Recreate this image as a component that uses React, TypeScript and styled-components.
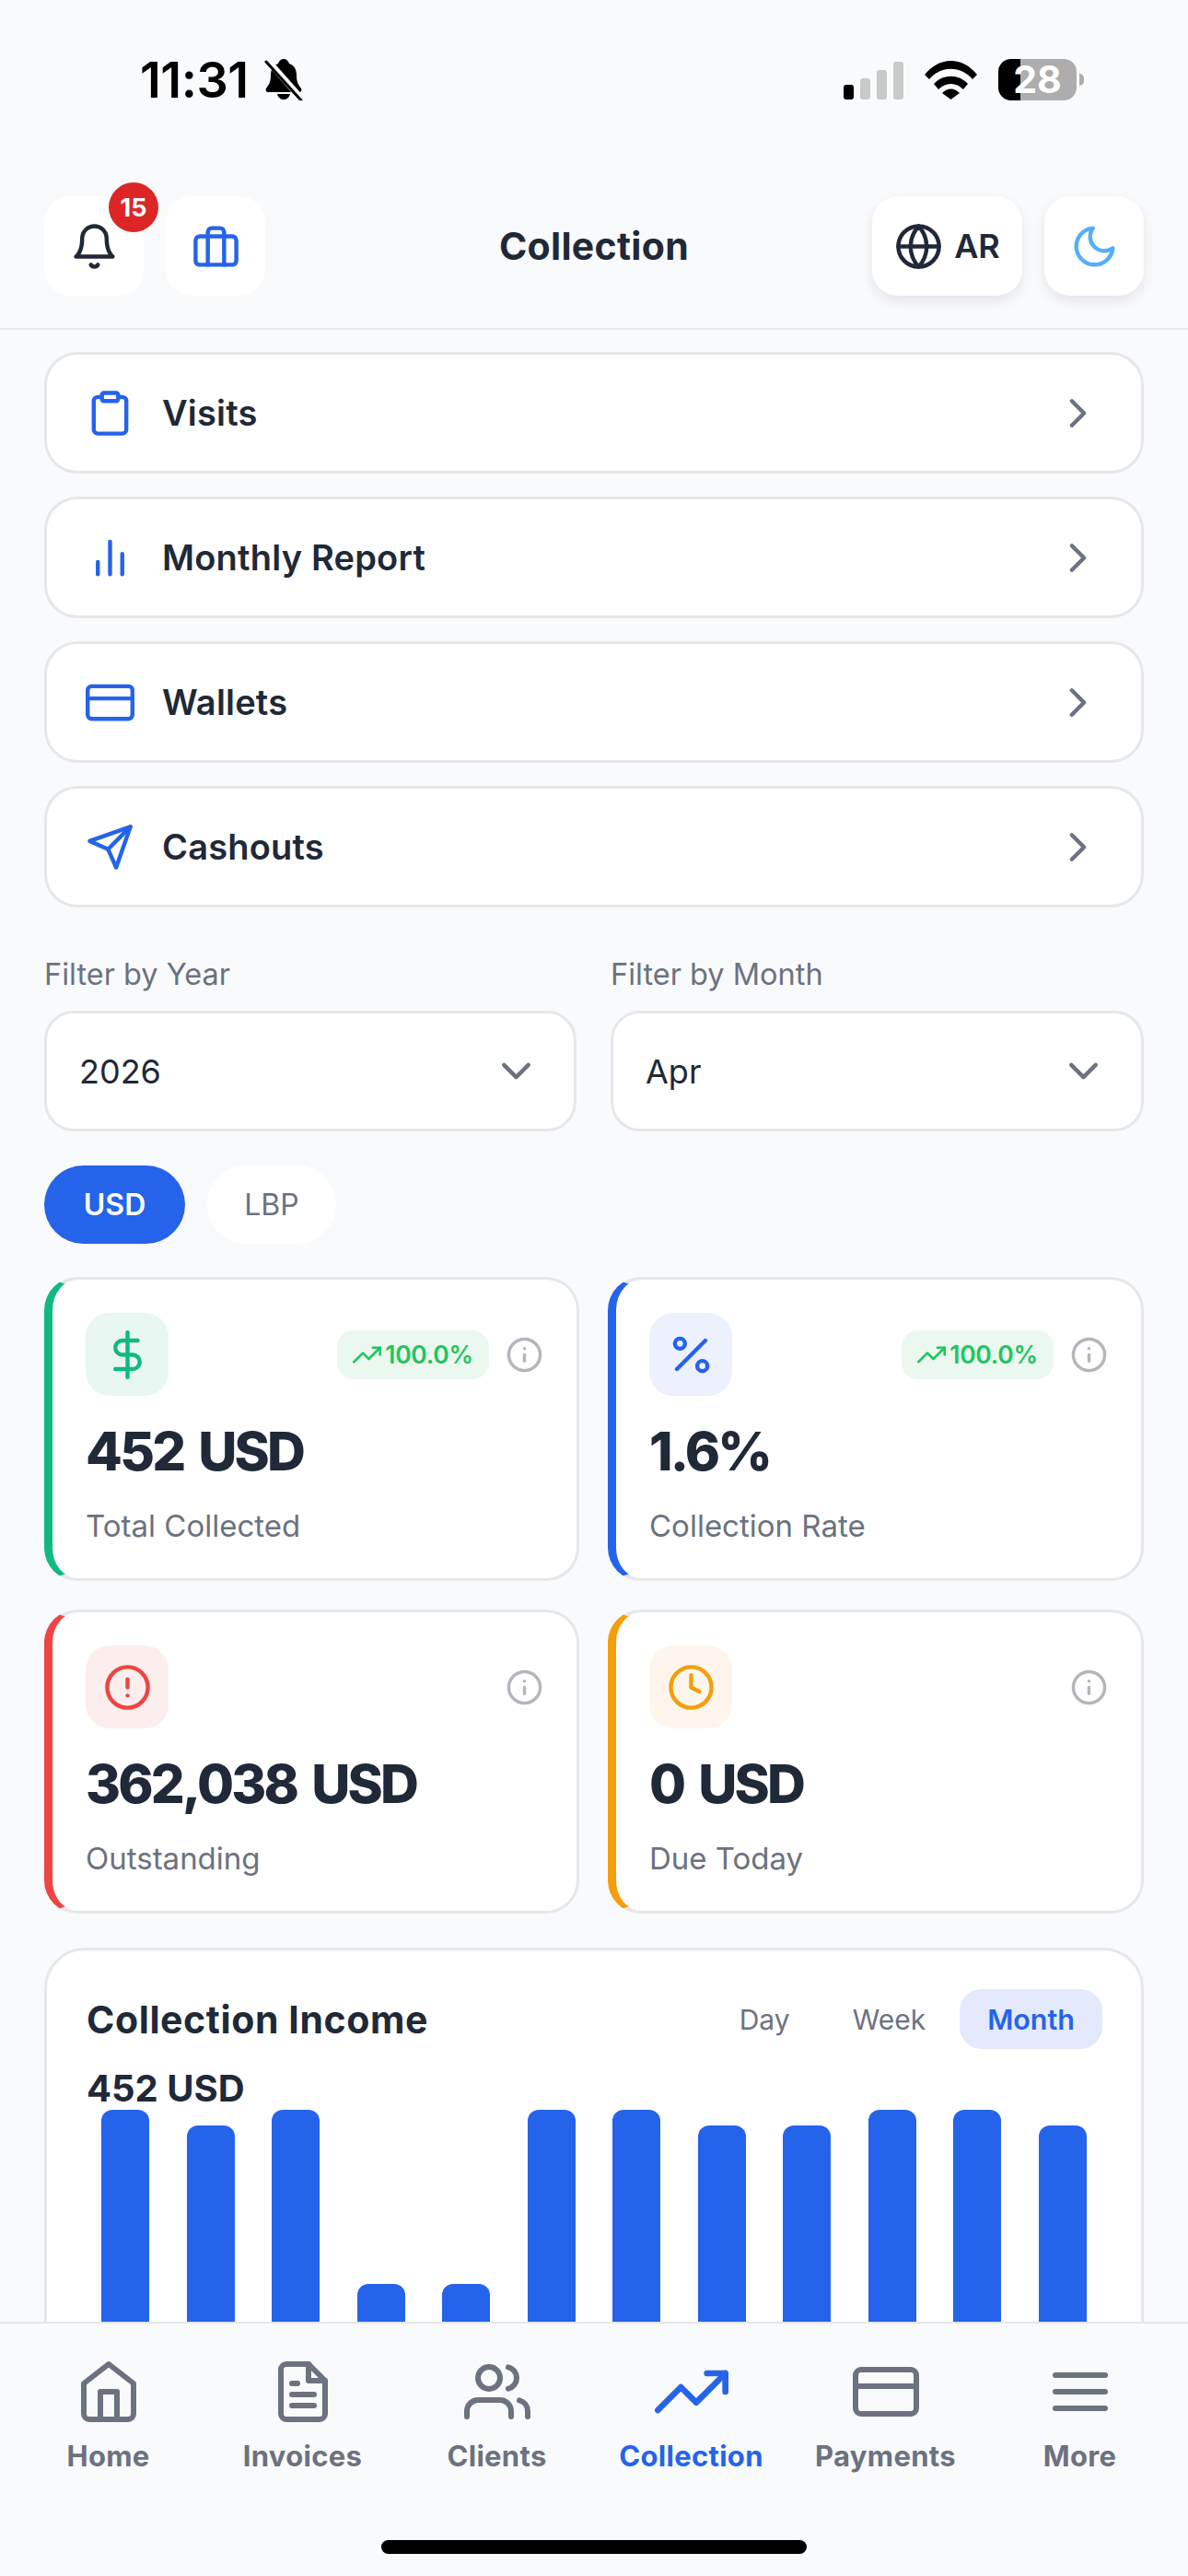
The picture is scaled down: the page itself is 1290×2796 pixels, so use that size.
import styled, { createGlobalStyle } from 'styled-components';
import {
  FiAlertCircle,
  FiBarChart2,
  FiBell,
  FiBriefcase,
  FiChevronDown,
  FiChevronRight,
  FiClipboard,
  FiClock,
  FiCreditCard,
  FiDollarSign,
  FiFileText,
  FiGlobe,
  FiHome,
  FiInfo,
  FiMenu,
  FiMoon,
  FiPercent,
  FiSend,
  FiTrendingUp,
  FiUsers,
} from 'react-icons/fi';
import type { ReactNode } from 'react';

const BLUE = '#2563eb';
const INK = '#1f2937';
const MUTED = '#6b7280';
const LINE = '#e5e7eb';
const FONT = `Inter, "Liberation Sans", sans-serif`;

const GlobalStyle = createGlobalStyle`
  html, body {
    margin: 0;
    padding: 0;
    background: #f9fafc;
  }
  * {
    box-sizing: border-box;
  }
`;

const Screen = styled.div`
  position: relative;
  width: 1290px;
  height: 2796px;
  overflow: hidden;
  background: #f9fafc;
  font-family: ${FONT};
  color: ${INK};
`;

const StatusBar = styled.div`
  height: 198px;
  padding: 64px 113px 0 152px;
  display: flex;
  align-items: flex-start;
  justify-content: space-between;
`;

const TimeGroup = styled.div`
  display: flex;
  align-items: center;
  gap: 17px;
  height: 45px;
`;

const Time = styled.span`
  font-size: 54px;
  font-weight: 600;
  letter-spacing: -0.5px;
  line-height: 45px;
  color: #000;
`;

const StatusIcons = styled.div`
  display: flex;
  align-items: center;
  gap: 23px;
  height: 45px;
`;

const SignalBars = styled.div`
  display: flex;
  align-items: flex-end;
  gap: 7px;
  height: 41px;
  margin-top: 2px;
`;

const SignalBar = styled.span<{ $h: number; $on?: boolean }>`
  width: 11px;
  height: ${(p) => p.$h}px;
  border-radius: 3px;
  background: ${(p) => (p.$on ? '#000' : '#c8c9c9')};
`;

const Battery = styled.div`
  position: relative;
  width: 85px;
  height: 45px;
  margin-right: 8px;
  border-radius: 14px;
  background: linear-gradient(90deg, #000 0 24px, #adadad 24px);
  display: flex;
  align-items: center;
  justify-content: center;
  color: #fff;
  font-size: 41px;
  font-weight: 700;
  line-height: 1;

  &::after {
    content: '';
    position: absolute;
    left: 88px;
    top: 16px;
    width: 5px;
    height: 13px;
    border-radius: 0 5px 5px 0;
    background: #adadad;
  }
`;

const Header = styled.header`
  position: relative;
  height: 160px;
  padding: 15px 48px 0;
  border-bottom: 2px solid ${LINE};
  display: flex;
  align-items: flex-start;
  justify-content: space-between;
`;

const HeaderGroup = styled.div<{ $gap: number }>`
  display: flex;
  gap: ${(p) => p.$gap}px;
`;

const HeaderTitle = styled.h1`
  position: absolute;
  left: 0;
  right: 0;
  top: 42px;
  margin: 0;
  text-align: center;
  font-size: 41px;
  font-weight: 700;
  letter-spacing: 0.3px;
  line-height: 54px;
  color: ${INK};
`;

const IconButton = styled.div<{ $raised?: boolean; $color?: string }>`
  position: relative;
  height: 108px;
  min-width: 108px;
  border-radius: 28px;
  background: #fff;
  display: flex;
  align-items: center;
  justify-content: center;
  gap: 12px;
  color: ${(p) => p.$color ?? INK};
  font-size: 53px;
  box-shadow: ${(p) => (p.$raised ? '0 6px 14px rgba(17, 24, 39, 0.09)' : 'none')};
`;

const LangButton = styled(IconButton)`
  width: 163px;
`;

const LangText = styled.span`
  font-size: 36px;
  font-weight: 600;
  color: ${INK};
`;

const Badge = styled.span`
  position: absolute;
  top: -15px;
  right: -16px;
  width: 54px;
  height: 54px;
  border-radius: 50%;
  background: #dc2626;
  color: #fff;
  display: flex;
  align-items: center;
  justify-content: center;
  font-size: 27px;
  font-weight: 700;
`;

const Content = styled.main`
  padding: 24px 48px 0;
  display: flex;
  flex-direction: column;
`;

const MenuList = styled.nav`
  display: flex;
  flex-direction: column;
  gap: 25px;
`;

const MenuRow = styled.div`
  height: 132px;
  padding: 0 42px 0 42px;
  background: #fff;
  border: 3px solid ${LINE};
  border-radius: 36px;
  display: flex;
  align-items: center;
  color: ${BLUE};
  font-size: 53px;
`;

const MenuIconSlot = styled.span`
  width: 53px;
  margin-right: 30px;
  display: flex;
`;

const MenuLabel = styled.span`
  flex: 1;
  font-size: 38px;
  font-weight: 600;
  letter-spacing: 0.2px;
  color: ${INK};
`;

const RowChevron = styled.span`
  display: flex;
  color: ${MUTED};
`;

const Filters = styled.div`
  margin-top: 52px;
  display: grid;
  grid-template-columns: 578px 579px;
  justify-content: space-between;
`;

const FilterLabel = styled.div`
  height: 42px;
  margin-bottom: 18px;
  font-size: 32.5px;
  line-height: 42px;
  color: ${MUTED};
`;

const SelectBox = styled.div`
  height: 131px;
  padding: 0 36px 0 35px;
  background: #fff;
  border: 3px solid ${LINE};
  border-radius: 32px;
  display: flex;
  align-items: center;
  justify-content: space-between;
  font-size: 36px;
  color: ${INK};
  svg {
    font-size: 53px;
    color: ${MUTED};
  }
`;

const CurrencyRow = styled.div`
  margin-top: 37px;
  display: flex;
  gap: 24px;
`;

const CurrencyPill = styled.div<{ $active?: boolean }>`
  height: 85px;
  width: ${(p) => (p.$active ? 153 : 140)}px;
  border-radius: 43px;
  background: ${(p) => (p.$active ? BLUE : '#fff')};
  color: ${(p) => (p.$active ? '#fff' : MUTED)};
  font-size: 32px;
  font-weight: ${(p) => (p.$active ? 600 : 400)};
  display: flex;
  align-items: center;
  justify-content: center;
`;

const StatGrid = styled.div`
  margin-top: 36px;
  display: grid;
  grid-template-columns: 581px 582px;
  justify-content: space-between;
  row-gap: 31px;
`;

const StatCard = styled.div<{ $accent: string }>`
  height: 330px;
  padding: 36px 36px 0 36px;
  background: #fff;
  border: 3px solid ${LINE};
  border-left: 9px solid ${(p) => p.$accent};
  border-radius: 36px;
`;

const StatTop = styled.div`
  display: flex;
  align-items: center;
  height: 90px;
`;

const StatIconBox = styled.div<{ $color: string; $bg: string }>`
  width: 90px;
  height: 90px;
  border-radius: 26px;
  background: ${(p) => p.$bg};
  color: ${(p) => p.$color};
  font-size: 53px;
  display: flex;
  align-items: center;
  justify-content: center;
`;

const TrendPill = styled.div`
  margin-left: auto;
  height: 53px;
  width: 165px;
  border-radius: 18px;
  background: #ebf8f0;
  color: #22c55e;
  display: flex;
  align-items: center;
  justify-content: center;
  gap: 4px;
  font-size: 26.5px;
  font-weight: 600;
  letter-spacing: -0.3px;
  svg {
    font-size: 31px;
  }
`;

const InfoMark = styled.span<{ $solo?: boolean }>`
  margin-left: ${(p) => (p.$solo ? 'auto' : '18px')};
  display: flex;
  font-size: 41px;
  color: #b4b6bd;
`;

const StatValue = styled.div`
  margin-top: 24px;
  font-size: 58px;
  font-weight: 800;
  letter-spacing: -2.8px;
  word-spacing: 6px;
  line-height: 72px;
  color: ${INK};
`;

const StatLabel = styled.div`
  margin-top: 25px;
  font-size: 33px;
  line-height: 40px;
  color: ${MUTED};
`;

const ChartCard = styled.section`
  margin-top: 37px;
  height: 600px;
  padding: 42px 42px 0 43px;
  background: #fff;
  border: 3px solid ${LINE};
  border-radius: 44px;
`;

const ChartHead = styled.div`
  display: flex;
  align-items: center;
  justify-content: space-between;
  height: 65px;
`;

const ChartTitle = styled.h2`
  margin: 0;
  font-size: 41px;
  font-weight: 700;
  letter-spacing: 0.6px;
  color: ${INK};
`;

const RangeTabs = styled.div`
  display: flex;
  align-items: center;
  gap: 6px;
`;

const RangeTab = styled.div<{ $active?: boolean }>`
  height: 65px;
  padding: 0 ${(p) => (p.$active ? 30 : 31)}px;
  border-radius: 24px;
  background: ${(p) => (p.$active ? '#e4eafc' : 'transparent')};
  color: ${(p) => (p.$active ? BLUE : MUTED)};
  font-size: ${(p) => (p.$active ? 30.5 : 30)}px;
  font-weight: ${(p) => (p.$active ? 600 : 400)};
  display: flex;
  align-items: center;
`;

const ChartTotal = styled.div`
  margin-top: 21px;
  height: 44px;
  font-size: 40px;
  font-weight: 700;
  line-height: 44px;
  color: ${INK};
`;

const ChartBars = styled.div`
  margin-top: 1px;
  padding: 0 17px 0 16px;
  height: 400px;
  display: flex;
  justify-content: space-between;
  align-items: flex-start;
`;

const ChartBar = styled.div<{ $offset: number }>`
  width: 52px;
  height: 400px;
  margin-top: ${(p) => p.$offset}px;
  border-radius: 12px 12px 0 0;
  background: ${BLUE};
`;

const BottomNav = styled.nav`
  position: absolute;
  left: 0;
  right: 0;
  bottom: 0;
  height: 276px;
  padding: 0 12px;
  background: #f9fafc;
  border-top: 2px solid ${LINE};
  display: grid;
  grid-template-columns: repeat(6, 1fr);
  align-items: flex-start;
`;

const NavItem = styled.div<{ $active?: boolean }>`
  height: 180px;
  display: flex;
  flex-direction: column;
  align-items: center;
  color: ${(p) => (p.$active ? BLUE : MUTED)};
`;

const NavIcon = styled.span<{ $active?: boolean }>`
  height: 72px;
  margin-top: 38px;
  display: flex;
  align-items: center;
  justify-content: center;
  font-size: ${(p) => (p.$active ? 80 : 72)}px;
`;

const NavLabel = styled.span`
  margin-top: 14px;
  font-size: 31px;
  font-weight: 700;
  letter-spacing: 0.3px;
  line-height: 40px;
`;

const HomeIndicator = styled.div`
  position: absolute;
  left: 414px;
  bottom: 24px;
  width: 462px;
  height: 15px;
  border-radius: 8px;
  background: #000;
`;

const menuItems: { label: string; icon: ReactNode }[] = [
  { label: 'Visits', icon: <FiClipboard /> },
  { label: 'Monthly Report', icon: <FiBarChart2 /> },
  { label: 'Wallets', icon: <FiCreditCard /> },
  { label: 'Cashouts', icon: <FiSend /> },
];

const stats = [
  { value: '452 USD', label: 'Total Collected', accent: '#10b981', bg: '#e8f7f2', icon: <FiDollarSign />, trend: true },
  { value: '1.6%', label: 'Collection Rate', accent: BLUE, bg: '#ecf1fd', icon: <FiPercent />, trend: true },
  { value: '362,038 USD', label: 'Outstanding', accent: '#ef4444', bg: '#fdeeee', icon: <FiAlertCircle />, trend: false },
  { value: '0 USD', label: 'Due Today', accent: '#f59e0b', bg: '#fef6ec', icon: <FiClock />, trend: false },
];

// how far each bar starts below the tallest one
const barOffsets = [0, 17, 0, 189, 189, 0, 0, 17, 17, 0, 0, 17];

const navItems = [
  { label: 'Home', icon: <FiHome /> },
  { label: 'Invoices', icon: <FiFileText /> },
  { label: 'Clients', icon: <FiUsers /> },
  { label: 'Collection', icon: <FiTrendingUp />, active: true },
  { label: 'Payments', icon: <FiCreditCard /> },
  { label: 'More', icon: <FiMenu /> },
];

function MutedBell() {
  return (
    <svg width="42" height="45" viewBox="0 0 42 45">
      <path
        d="M21 0c3 0 5 2 6 5 6 2 8 7 8 13 0 7 2 10 5 14 1 2 0 4-2 4H4c-2 0-3-2-2-4 3-4 5-7 5-14 0-6 2-11 8-13 1-3 3-5 6-5z"
        fill="#000"
      />
      <path d="M14 38h14c-1 4-4 6-7 6s-6-2-7-6z" fill="#000" />
      <line x1="3" y1="1" x2="41" y2="44" stroke="#f9fafc" strokeWidth="7" />
      <line x1="2" y1="3" x2="40" y2="45" stroke="#000" strokeWidth="3" strokeLinecap="round" />
    </svg>
  );
}

function WifiMark() {
  return (
    <svg width="57" height="42" viewBox="0 0 57 42">
      <path d="M0 15C16 -5 41 -5 57 15l-5 5C39 5 18 5 5 20z" fill="#000" />
      <path d="M10 25c10-11 27-11 37 0l-5 6c-8-8-19-8-27 0z" fill="#000" />
      <path d="M19 35c6-6 13-6 19 0l-9.500 7z" fill="#000" />
    </svg>
  );
}

export default function App() {
  return (
    <>
      <GlobalStyle />
      <Screen>
        <StatusBar>
          <TimeGroup>
            <Time>11:31</Time>
            <MutedBell />
          </TimeGroup>
          <StatusIcons>
            <SignalBars>
              <SignalBar $h={16} $on />
              <SignalBar $h={23} />
              <SignalBar $h={32} />
              <SignalBar $h={41} />
            </SignalBars>
            <WifiMark />
            <Battery>28</Battery>
          </StatusIcons>
        </StatusBar>

        <Header>
          <HeaderGroup $gap={24}>
            <IconButton>
              <FiBell />
              <Badge>15</Badge>
            </IconButton>
            <IconButton $color={BLUE}>
              <FiBriefcase />
            </IconButton>
          </HeaderGroup>
          <HeaderTitle>Collection</HeaderTitle>
          <HeaderGroup $gap={24}>
            <LangButton $raised>
              <FiGlobe />
              <LangText>AR</LangText>
            </LangButton>
            <IconButton $raised $color="#56aefc">
              <FiMoon />
            </IconButton>
          </HeaderGroup>
        </Header>

        <Content>
          <MenuList>
            {menuItems.map((item) => (
              <MenuRow key={item.label}>
                <MenuIconSlot>{item.icon}</MenuIconSlot>
                <MenuLabel>{item.label}</MenuLabel>
                <RowChevron>
                  <FiChevronRight />
                </RowChevron>
              </MenuRow>
            ))}
          </MenuList>

          <Filters>
            <div>
              <FilterLabel>Filter by Year</FilterLabel>
              <SelectBox>
                2026
                <FiChevronDown />
              </SelectBox>
            </div>
            <div>
              <FilterLabel>Filter by Month</FilterLabel>
              <SelectBox>
                Apr
                <FiChevronDown />
              </SelectBox>
            </div>
          </Filters>

          <CurrencyRow>
            <CurrencyPill $active>USD</CurrencyPill>
            <CurrencyPill>LBP</CurrencyPill>
          </CurrencyRow>

          <StatGrid>
            {stats.map((stat) => (
              <StatCard key={stat.label} $accent={stat.accent}>
                <StatTop>
                  <StatIconBox $color={stat.accent} $bg={stat.bg}>
                    {stat.icon}
                  </StatIconBox>
                  {stat.trend && (
                    <TrendPill>
                      <FiTrendingUp />
                      100.0%
                    </TrendPill>
                  )}
                  <InfoMark $solo={!stat.trend}>
                    <FiInfo />
                  </InfoMark>
                </StatTop>
                <StatValue>{stat.value}</StatValue>
                <StatLabel>{stat.label}</StatLabel>
              </StatCard>
            ))}
          </StatGrid>

          <ChartCard>
            <ChartHead>
              <ChartTitle>Collection Income</ChartTitle>
              <RangeTabs>
                <RangeTab>Day</RangeTab>
                <RangeTab>Week</RangeTab>
                <RangeTab $active>Month</RangeTab>
              </RangeTabs>
            </ChartHead>
            <ChartTotal>452 USD</ChartTotal>
            <ChartBars>
              {barOffsets.map((offset, i) => (
                <ChartBar key={i} $offset={offset} />
              ))}
            </ChartBars>
          </ChartCard>
        </Content>

        <BottomNav>
          {navItems.map((item) => (
            <NavItem key={item.label} $active={item.active}>
              <NavIcon $active={item.active}>{item.icon}</NavIcon>
              <NavLabel>{item.label}</NavLabel>
            </NavItem>
          ))}
        </BottomNav>
        <HomeIndicator />
      </Screen>
    </>
  );
}
